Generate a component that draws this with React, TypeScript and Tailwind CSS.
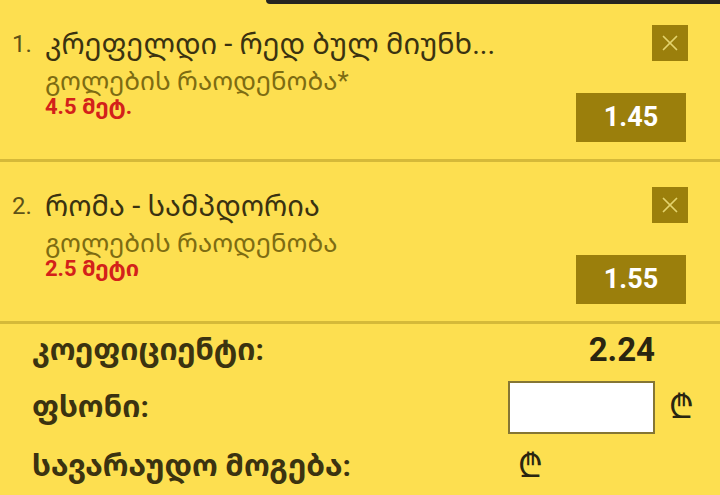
import { X } from 'lucide-react';

interface Bet {
  id: number;
  title: string;
  market: string;
  pick: string;
  odds: string;
}

const bets: Bet[] = [
  { id: 1, title: 'კრეფელდი - რედ ბულ მიუნხ...', market: 'გოლების რაოდენობა*', pick: '4.5 მეტ.', odds: '1.45' },
  { id: 2, title: 'რომა - სამპდორია', market: 'გოლების რაოდენობა', pick: '2.5 მეტი', odds: '1.55' },
];

const font = { fontFamily: 'Roboto, "Noto Sans Georgian", "DejaVu Sans", sans-serif' };

export default function App() {
  return (
    <div className="w-[720px] h-[495px] overflow-hidden bg-[#fddf50] flex flex-col relative" style={font}>
      {/* top dark strip */}
      <div className="absolute top-0 left-[266px] right-0 h-[4px] bg-[#262420] rounded-bl-[4px]" />

      {bets.map((bet) => (
        <div key={bet.id} className="h-[162px] shrink-0 flex border-b-[3px] border-[#d5b939] pl-[12px] pr-[32px] pt-[25px] pb-[17px]">
          <div className="flex-1 flex pt-[1px]">
            <span className="w-[33px] text-[24px] leading-[36px] text-[#5e5218]">{bet.id}.</span>
            <div className="flex flex-col">
              <span className="text-[29px] leading-[36px] text-[#3a3210] whitespace-nowrap">{bet.title}</span>
              <span className="mt-[5px] text-[26px] leading-[28px] text-[#7d6c12] whitespace-nowrap">{bet.market}</span>
              <span className="text-[22px] leading-[24px] font-bold text-[#d3211a]">{bet.pick}</span>
            </div>
          </div>
          <div className="flex flex-col items-end justify-between">
            <button className="w-[36px] h-[36px] bg-[#9b7f0c] flex items-center justify-center">
              <X size={26} strokeWidth={1.6} className="text-[#e4d36e]" />
            </button>
            <div className="w-[110px] h-[49px] mr-[2px] bg-[#9b7f0c] flex items-center justify-center text-white font-bold text-[27px]">
              {bet.odds}
            </div>
          </div>
        </div>
      ))}

      {/* summary */}
      <div className="flex-1 grid grid-cols-[476px_147px_1fr] grid-rows-[52px_62px_56px] items-center pl-[32px] text-[#3b3310] font-bold">
        <span className="text-[30px] leading-[36px]">კოეფიციენტი:</span>
        <span className="text-[33px] leading-[36px] text-right text-[#2a2510]">2.24</span>
        <span />

        <span className="text-[30px] leading-[36px]">ფსონი:</span>
        <input className="w-[147px] h-[53px] bg-white border-2 border-[#857634] outline-none" />
        <span className="pl-[14px] text-[32px] leading-[36px] font-normal text-[#2a2510]">₾</span>

        <span className="text-[30px] leading-[36px]">სავარაუდო მოგება:</span>
        <span className="pl-[10px] text-[32px] leading-[36px] font-normal text-[#2a2510]">₾</span>
        <span />
      </div>
    </div>
  );
}
